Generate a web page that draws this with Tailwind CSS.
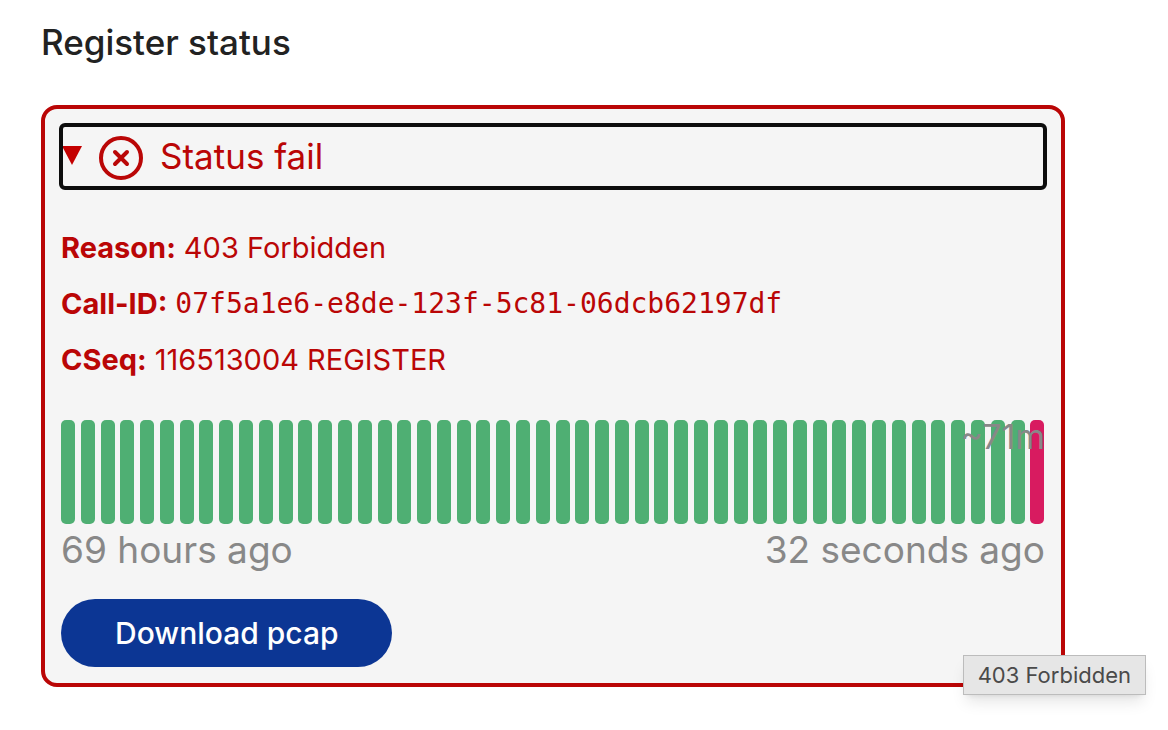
<!DOCTYPE html>
<html lang="en">
<head>
    <meta charset="UTF-8">
    <meta name="viewport" content="width=device-width, initial-scale=1.0">
    <title>Register status</title>
    <script src="https://cdn.jsdelivr.net/npm/@tailwindcss/browser@4"></script>
</head>
<body class="bg-white font-[Inter,sans-serif]">
    <main class="max-w-[1106px] px-[41px] pt-5 pb-10">
        <h1 class="text-[35px] leading-[45px] font-medium text-[#222222]">Register status</h1>

        <section class="relative mt-10 rounded-[16px] border-4 border-[#ba0606] bg-[#f5f5f5] p-4 text-[#ba0606]">
            <details open>
                <summary class="flex h-[63px] cursor-pointer list-none items-center rounded-[4px] text-[35px] outline-4 -outline-offset-2 outline-[#0d0d0d]">
                    <svg class="mb-1 h-5 w-[21px]" viewBox="0 0 21 20" fill="#c40000"><path d="M1 1h20L11 20z"/></svg>
                    <svg class="ml-4 h-[46px] w-[46px]" viewBox="0 0 46 46" fill="none" stroke="currentColor" stroke-width="4" stroke-linecap="round">
                        <circle cx="23" cy="24" r="20"/>
                        <path d="M17 18l12 12M29 18L17 30"/>
                    </svg>
                    <span class="ml-4">Status fail</span>
                </summary>

                <dl class="mt-8 text-[29px] leading-[56px]">
                    <div class="flex gap-2">
                        <dt class="font-bold">Reason:</dt>
                        <dd>403 Forbidden</dd>
                    </div>
                    <div class="flex gap-2">
                        <dt class="font-bold">Call-ID:</dt>
                        <dd class="font-['DejaVu_Sans_Mono',monospace] text-[28px]">07f5a1e6-e8de-123f-5c81-06dcb62197df</dd>
                    </div>
                    <div class="flex gap-2">
                        <dt class="font-bold">CSeq:</dt>
                        <dd>116513004 REGISTER</dd>
                    </div>
                </dl>

                <div class="relative mt-8">
                    <div id="bars" class="flex h-[104px] justify-between"></div>
                    <span class="absolute top-0 right-0 text-[34px] leading-[34px] text-[#888888]">~71m</span>
                </div>
                <div class="flex justify-between text-[37px] leading-[51px] text-[#888888]">
                    <span>69 hours ago</span>
                    <span>32 seconds ago</span>
                </div>

                <button type="button" class="mt-6 h-[68px] cursor-pointer rounded-full bg-[#0c3694] px-[54px] text-[30px] font-medium text-white">Download pcap</button>
            </details>

            <div role="tooltip" class="absolute -right-[85px] -bottom-3 border border-[#bcbcbc] bg-[#e6e6e6] px-3.5 text-[22px] leading-[38px] whitespace-nowrap text-[#4a4a4a] shadow-lg">403 Forbidden</div>
        </section>
    </main>

    <script>
        // 49 successful registrations followed by the failed one
        const bars = document.getElementById('bars');
        for (let i = 0; i < 50; i++) {
            const bar = document.createElement('div');
            bar.className = i < 49 ? 'w-[14px] rounded-[5px] bg-[#4faf73]' : 'w-[14px] rounded-[5px] bg-[#d81b60]';
            bars.appendChild(bar);
        }
    </script>
</body>
</html>
